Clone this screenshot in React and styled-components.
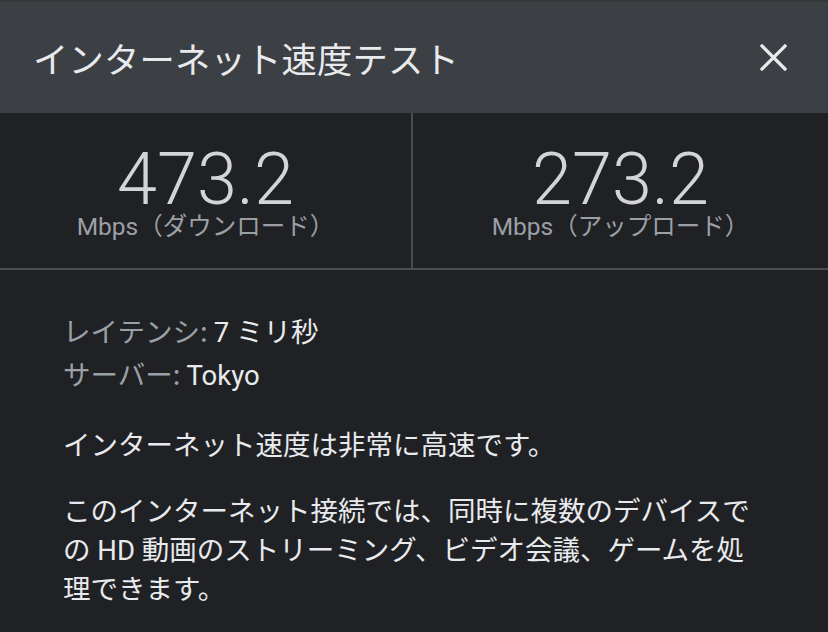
import React from "react";
import styled, { createGlobalStyle } from "styled-components";

const Global = createGlobalStyle`
  html, body {
    margin: 0;
    padding: 0;
    background: #202124;
  }
  body {
    width: 828px;
    height: 632px;
    overflow: hidden;
    font-family: Roboto, "Noto Sans CJK JP", sans-serif;
    -webkit-font-smoothing: antialiased;
  }
`;

const Dialog = styled.div`
  width: 828px;
  height: 632px;
  background: #202124;
  display: flex;
  flex-direction: column;
`;

const Header = styled.header`
  height: 111px;
  border-top: 2px solid #35373a;
  background: #3c3f43;
  display: flex;
  align-items: center;
  justify-content: space-between;
  padding: 0 41px 0 33px;
  box-sizing: content-box;
`;

const Title = styled.h1`
  margin: 0;
  font-family: "Noto Sans CJK JP", sans-serif;
  font-weight: 400;
  font-size: 35.3px;
  color: #e8eaed;
  letter-spacing: 0.2px;
`;

const CloseButton = styled.button`
  width: 27px;
  height: 27px;
  padding: 0;
  border: 0;
  background: transparent;
  display: flex;
  cursor: pointer;
`;

const Stats = styled.section`
  display: grid;
  grid-template-columns: 413px 1fr;
  height: 155px;
  border-bottom: 2px solid #4a4c50;
`;

const Stat = styled.div`
  display: flex;
  flex-direction: column;
  align-items: center;
  padding-top: 34px;
  border-right: ${(p) => (p.$divider ? "2px solid #4a4c50" : "none")};
`;

const Value = styled.div`
  font-family: Roboto, sans-serif;
  font-weight: 300;
  font-size: 72px;
  line-height: 66px;
  color: #d3d4d6;
`;

const Unit = styled.div`
  font-family: Roboto, "Noto Sans CJK JP", sans-serif;
  font-size: 24.5px;
  line-height: 28px;
  color: #9aa0a6;
`;

const Body = styled.section`
  padding: 40px 63px 0 63px;
  color: #e8eaed;
  font-size: 27.5px;
`;

const InfoLine = styled.div`
  line-height: 40px;
  white-space: nowrap;
`;

const Label = styled.span`
  color: #9aa0a6;
  font-family: "Noto Sans CJK JP", sans-serif;
`;

const InfoValue = styled.span`
  color: #e8eaed;
  font-family: Roboto, "Noto Sans CJK JP", sans-serif;
`;

const Paragraph = styled.p`
  margin: ${(p) => p.$mt}px 0 0 0;
  line-height: ${(p) => p.$lh}px;
  font-family: Roboto, "Noto Sans CJK JP", sans-serif;
  color: #e8eaed;
  width: 700px;
`;

function CloseIcon() {
  return (
    <svg width="27" height="27" viewBox="0 0 27 27">
      <path
        d="M2 2 L25 25 M25 2 L2 25"
        stroke="#e8eaed"
        strokeWidth="3.2"
        strokeLinecap="square"
        fill="none"
      />
    </svg>
  );
}

export default function App() {
  return (
    <>
      <Global />
      <Dialog>
        <Header>
          <Title>インターネット速度テスト</Title>
          <CloseButton aria-label="閉じる">
            <CloseIcon />
          </CloseButton>
        </Header>
        <Stats>
          <Stat $divider>
            <Value>473.2</Value>
            <Unit>Mbps（ダウンロード）</Unit>
          </Stat>
          <Stat>
            <Value>273.2</Value>
            <Unit>Mbps（アップロード）</Unit>
          </Stat>
        </Stats>
        <Body>
          <InfoLine>
            <Label>レイテンシ: </Label>
            <InfoValue>7 ミリ秒</InfoValue>
          </InfoLine>
          <InfoLine>
            <Label>サーバー: </Label>
            <InfoValue>Tokyo</InfoValue>
          </InfoLine>
          <Paragraph $mt={29} $lh={41}>
            インターネット速度は非常に高速です。
          </Paragraph>
          <Paragraph $mt={26} $lh={39}>
            このインターネット接続では、同時に複数のデバイスでの HD
            動画のストリーミング、ビデオ会議、ゲームを処理できます。
          </Paragraph>
        </Body>
      </Dialog>
    </>
  );
}
